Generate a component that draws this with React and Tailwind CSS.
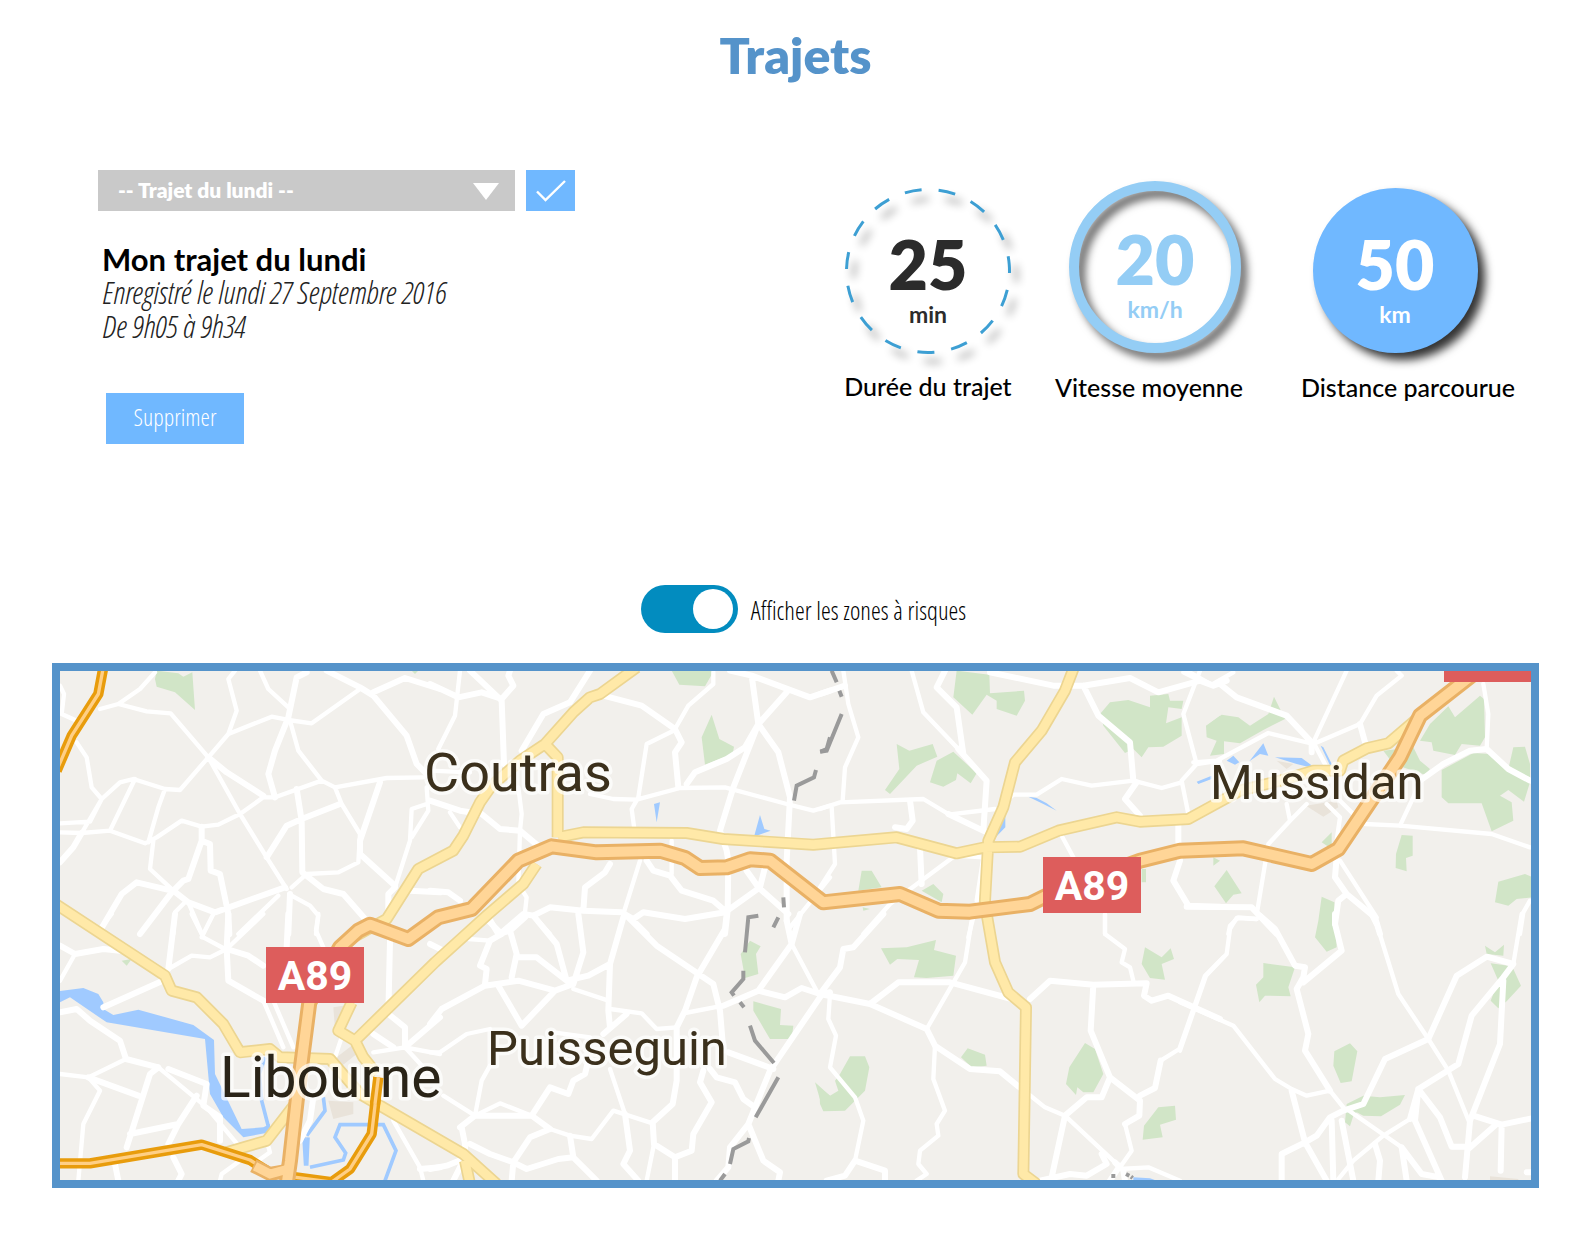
import React from "react";

/* Map geometry: each tile has its own origin and uses a third-of-a-unit grid. */
const TILES = [
  {
    x: 40, y: 655,
    minor: "M180 165L235 150L320 172L392 178L505 310M235 150L300 105L345 55M60 95L72 120L65 180L120 205M110 265L140 310L155 400L185 435M60 508L150 503L185 435L240 385L280 375L375 405L420 408L505 310L565 240L590 170L565 75L585 50M60 535L125 537L210 530L315 568L350 550L425 500L485 518L535 512L600 480L670 430L705 430L845 380L885 400L1040 372L1150 370M125 537L185 435M285 375L210 530M375 405L355 460L325 565M340 560L330 645L400 710M755 700L800 660L895 655L955 625L960 540L905 450L885 400M565 240L695 188L745 198L815 208L960 105M660 50L685 105L745 160M750 200L775 290L845 380M505 310L600 480L680 610L740 705M400 840L405 775L435 745M445 745L490 850M715 725L595 840M755 725L810 755L835 785L828 840M1115 550L1165 470L1160 400M1065 700L1110 560L1115 465L1160 450",
    wide: "M60 625L100 580L125 537M400 710L445 745L525 775L735 700M485 518L485 560L445 675L430 680L395 715L300 840M485 560L510 570L512 650L540 660L565 780L568 840M180 830L245 720L290 685L395 710M800 55L770 70L745 190L705 290L685 360L705 430M505 310L560 355L670 425M860 50L960 100L1000 125L1100 245L1130 330L1170 370M1000 115L1095 72L1200 105M770 405L785 500L787 655L850 705L910 720L980 800M680 610L740 515L785 495L900 450M1020 385L960 560L960 600L1065 695M750 720L745 840M1065 700L1045 720L1045 770M1110 710L1200 715",
    green: "M345 75L350 50L415 58L430 68L457 55L465 168L405 115L350 98ZM1115 50L1135 50L1125 60Z",
  },
  {
    x: 430, y: 655,
    minor: "M90 50L75 185L25 285M735 228L650 270L625 430L605 465L615 540M850 55L850 90L775 155L735 225M480 420L550 435L620 437L750 402L885 400L1070 450L1150 470L1200 455M60 475L90 520M265 400L275 480L270 530L265 690L290 730L285 775M630 620L580 780M725 560L725 660M1080 820L1200 670M310 785L360 840M0 350L120 355",
    wide: "M0 90L85 130L155 115L215 135L250 95L235 65L240 50M120 50L215 140L222 330M275 290L340 180L420 145L480 50M520 125L635 155L735 225L755 265L735 295L745 400M770 390L795 355L890 315L945 280L985 210L910 400L870 530L890 590L895 620L893 770L885 840M900 50L965 65L1140 130L1200 110M965 65L985 210L1045 295L1080 430L1070 620L1070 800M985 210L1070 115M0 440L90 470L155 480L210 525L270 530L330 580M0 710L55 715L90 740M540 630L525 655L465 700L460 770M650 620L670 650L720 665L755 710L850 740L885 770M950 650L985 700L1075 780M1005 640L990 700L885 775L765 795L640 775L610 795L575 775L460 770L360 760L310 785L280 780L210 840M175 800L215 840M605 795L650 840",
    green: "M725 50L852 50L825 97L748 92ZM845 182L868 255L912 278L908 300L825 332L815 250Z",
    water: "M672 450L690 445L680 505ZM990 483L1003 525L1022 530L972 548Z",
    border: "M1200 250L1190 285L1172 293M1158 348L1152 370L1100 395L1092 440M1060 730L1062 760M1045 790L1030 820",
  },
  {
    x: 820, y: 655,
    minor: "M70 50L85 150L115 250L75 340L68 440M0 465L60 445L310 435L385 480M35 460L45 630L0 700M275 50L310 175L415 285M385 482L525 465M490 610L470 740M460 790L445 850M130 840L210 750L405 605L490 610M565 435L580 422L650 422L725 375L815 395L940 380L1025 402L1085 385M1140 50L1090 180L1130 330L1085 380L1105 480M1130 330L1200 320M1090 55L1140 80M725 545L760 610M855 780L855 840",
    wide: "M0 120L75 95M385 480L500 535M270 440L278 500L260 525L225 520M300 580L305 690M415 285L500 380L490 530M375 50L350 100L410 160L430 300M510 55L700 95L790 95L930 72L1015 115L1140 80L1180 95L1220 80M790 95L835 185L930 265L940 380M950 385L915 435L960 485M1075 510L1075 560L1080 620L1060 680L1105 755L1200 758",
    green: "M410 50L508 62L510 118L612 110L615 140L590 185L530 165L530 140L500 122L457 182L400 130ZM230 270L268 290L338 270L352 308L290 335L210 420L195 408L238 345ZM350 320L400 293L470 358L452 388L412 358L408 378L370 398L330 385ZM842 178L870 145L925 138L990 160L990 125L1045 120L1050 140L1090 140L1085 165L1045 160L1038 208L1085 190L1085 245L1030 278L985 280L965 310L940 285L915 297L850 215ZM125 650L155 650L185 700L115 710ZM305 710L340 690L370 720L365 745ZM965 645L978 645L978 685L965 685ZM1160 215L1200 185L1200 260L1162 240ZM128 760L150 765L130 770Z",
    water: "M545 480L556 478L556 520L522 555ZM625 428L650 432L680 448L710 470L670 450Z",
    border: "M35 50L50 85M58 110L65 128M65 180L20 290L0 293",
  },
  {
    x: 1180, y: 655,
    minor: "M40 325L110 320L265 237L400 270L540 210M500 50L400 265L440 340M540 210L590 125L665 65L650 50M380 450L330 500L265 570L232 770M320 450L330 500M440 450L480 490L470 560M480 440L520 480M555 510L660 515L935 540L1050 580M660 515L700 430L720 380M910 90L925 180L920 285M145 840L150 815L175 790L230 795M480 620L590 790M1050 740L1030 775L1020 840M20 50L95 92L160 55",
    wide: "M120 90L170 130L320 185L395 265L395 295M540 210L555 265M720 380L790 330L870 290L920 285L985 345L1050 380M20 758L215 760L290 840M470 610L465 670L500 720L585 790L600 840M500 720L475 740L465 810",
    green: "M78 215L125 182L175 190L210 215L265 180L282 128L315 195L250 228L180 268L132 262L132 300L90 305L110 260L80 250ZM720 260L750 210L805 157L825 190L900 125L912 135L915 250L900 275L845 270L825 303L760 290L755 265ZM610 290L700 280L720 320L750 345L735 362L640 330ZM785 348L880 297L930 300L975 345L1050 385L1032 443L985 408L960 425L995 445L1000 500L935 532L905 448L805 448L785 430ZM1000 280L1035 278L1050 330L1050 370L985 345ZM665 543L698 545L698 605L678 612L680 652L647 642L648 600ZM955 683L1035 660L1060 670L1060 730L1010 735L985 755L945 745ZM140 648L185 718L160 722L138 748L103 697ZM425 565L455 535L455 585ZM425 728L463 745L470 880L440 893L405 850L415 800ZM100 610L120 620L100 635Z",
    water: "M50 383L95 365L95 375L55 390ZM140 320L160 305L178 325L165 332ZM208 322L250 268L265 305L240 300ZM285 310L365 312L410 345L350 330ZM422 275L430 280L468 355L460 355Z",
    urban: "M378 455L470 440L475 460L430 488ZM290 320L340 330L320 345Z",
  },
  {
    x: 40, y: 915,
    minor: "M60 200L105 120M215 0L180 45M385 165L455 125L510 130L560 105L670 0M455 0L490 70L555 105M670 260L730 400M835 0L828 50L850 100M60 480L145 490L258 435M145 490L180 530L130 630L115 800M355 460L500 580L600 700M700 260L760 400M905 370L885 430M1000 415L1095 400L1200 420M1060 620L1140 760L1150 800M680 680L690 715L640 750M600 740L545 780L540 800M485 70L520 0M1095 400L1150 460",
    wide: "M60 95L105 120L190 105L240 110M405 0L385 165M565 0L560 105L565 200L670 260M560 105L625 125L670 155M190 280L380 195M745 0L740 100M60 295L110 285L150 320L240 380L258 435L355 460M145 490L295 545M355 460L330 480L260 700M270 660L415 630L470 545M415 630L385 690M385 465L500 510L490 575L540 610L540 680M400 730L425 780L415 800M225 750L235 800M1050 80L1045 300L1095 340L1095 400L1200 310M1000 360L1060 400M1140 765L1200 760M820 550L810 620L780 680",
    green: "M245 140L275 135L260 155Z",
    water: "M50 232L130 222L175 240L190 265L190 285L220 303L295 287L460 333L522 378L525 480L605 645L670 640L690 630L690 655L610 670L550 610L510 540L495 375L200 325L90 250L50 270Z",
    stream: "M687 645L665 560L658 480L675 430M850 550L855 590L800 665M792 670L797 755M804 670L800 755M810 760L910 738L917 717L885 670L900 632L1030 632L1068 710L1035 800",
    urban: "M865 560L940 565L940 600L880 615ZM880 280L910 275L900 345L885 345ZM890 430L935 395L950 420L900 460Z",
  },
  {
    x: 430, y: 915,
    minor: "M0 415L30 415L110 360L180 345M180 455L155 500L135 605L40 545M135 605L210 568L305 605M540 465L585 600M765 297L880 275M540 285L635 298L680 345L740 340M668 628L550 590L485 675L420 665L360 645M672 690L650 800M1085 90L1165 240M115 75L180 80M535 260L430 225M370 355L480 370",
    wide: "M175 10L205 60L240 50L285 10M180 80L150 155L170 165L165 210M180 80L215 60M240 50L260 120L245 190M260 130L320 130L410 200M310 5L380 90L410 200L475 185L540 150M445 0L460 115L430 210M580 10L540 150L535 290L540 340M0 330L35 285L165 215L265 200L375 230L430 210M205 215L275 335L375 230M595 10L680 95L850 210L870 290L880 410M890 0L885 45L800 190L765 290L740 340L740 500L728 570L668 625L672 690L735 730L785 710L790 660L845 565L810 505L820 470M520 360L590 300M880 275L985 230L1065 250L1115 222L1170 240L1200 235M1070 20L1085 90M985 230L1085 90L1110 0M1180 235L1020 470L955 630L900 700L895 760L860 800M90 640L135 605L305 605L360 520L415 540L430 500L465 480L475 440M305 605L360 645M95 640L105 690L105 730L70 800M120 690L180 720L250 745L290 765L385 735L430 730L500 800M360 645L300 670L250 745L245 800M420 665L430 730M585 600L600 710L580 750L625 800M735 730L735 800M840 465L860 490L915 505L940 555L975 580M895 415L1030 465M955 630L1000 740L1050 775L1045 800M0 765L50 755L100 735M0 90L40 110",
    green: "M960 80L992 97L978 120L985 180L945 192L932 120ZM970 262L1053 285L1050 333L1090 335L1085 375L1020 375L970 290ZM1155 505L1200 545L1200 590L1180 590Z",
    border: "M985 5L955 10L945 115M940 170L940 195L905 235L912 245M930 265L942 280M960 335L975 380L1032 447M1045 490L977 610M957 672L955 682L910 705L900 750M885 780L870 800",
  },
  {
    x: 820, y: 915,
    minor: "M455 20L435 145L320 345M855 0L855 60L915 105L905 145L930 160L940 200M30 240L25 315L48 365L30 460L105 550L130 620L105 740M735 605L885 745M915 630L935 710L900 760M1022 440L1078 405L1155 185L1210 130M900 765L985 760L1080 800M345 395L340 495L375 590L350 630L355 665L300 710L295 750L320 780L290 800M625 540L675 580L735 605",
    wide: "M190 0L100 100L70 105L60 160L0 240L150 270L320 345L345 395L450 465L540 472L605 525M150 270L235 205L390 205L575 255M105 740L75 785L20 800M105 740L195 770L195 800M630 255L690 200L820 212L980 208L972 245L995 260L1045 245L1200 315M820 212L812 350L870 490L845 550L800 550L735 605L695 790M870 490L960 560L958 605L915 630M960 545L1005 522L1022 440M845 720L860 750L800 785L750 780L660 800M900 755L870 800M910 770L915 800M885 745L900 760",
    green: "M183 103L260 100L348 78L342 108L408 125L400 185L320 192L282 190L297 138L232 135L210 152ZM90 427L135 427L148 460L135 530L75 590L10 592L0 570L-2 520L30 545L55 530L45 500L60 480ZM443 403L495 422L500 455L455 460L423 430ZM795 387L825 405L850 480L820 535L790 535L772 520L768 543L738 510L748 460ZM975 100L1025 130L1052 103L1062 135L1025 150L1035 197L990 192L965 150ZM1015 580L1065 575L1068 617L1020 632L1028 670L968 677L972 635Z",
    water: "M940 790L990 793L1010 800L940 800Z",
    border: "M880 780L880 792M918 780L928 785M933 788L938 792",
  },
  {
    x: 1180, y: 915,
    minor: "M150 45L140 120L78 185L0 410M590 30L655 240L745 375L805 470L870 630M1000 150L1025 0M450 530L490 580M500 585L665 700M690 615L610 665L520 740L475 795M0 265L160 335L285 495L335 525L380 545L450 530M150 45L170 12L230 15",
    wide: "M240 5L285 45L345 155L375 160L370 190L350 225L385 360L375 410L450 530M465 0L465 30L485 110L370 205M575 0L590 30M490 590L550 570L615 435L745 375L830 185L920 128L1000 150L970 190L875 305L835 450L715 525L690 615M970 200L960 390L870 620L855 790M335 530L375 685L440 800M305 800L305 720L375 685L410 665L450 610L490 590M455 620L460 800M485 620L520 800M665 700L725 780L780 790M665 700L680 800M585 690L600 740L595 800M715 525L705 620L785 800M715 525L780 610L815 698L860 698M865 705L950 630M880 605L965 632L1060 612M965 632L962 770M1040 775L1060 775",
    green: "M250 147L345 160L325 220L332 247L255 245L238 265L228 212L250 190ZM510 388L532 412L515 502L482 507L460 455L463 412ZM500 570L550 545L600 550L675 543L660 572L603 607L550 605L530 595L520 605L510 637L495 625ZM915 95L945 115L972 92L970 125L920 120ZM932 148L985 155L1000 165L1023 215L980 262L955 283L932 260L955 200Z",
    urban: "M930 787L1015 795L1015 800L930 800Z",
  },
];

const ORIGIN = { NW: "translate(40 655) scale(.33333)", N: "translate(430 655) scale(.33333)", SW: "translate(40 915) scale(.33333)" };

const SECONDARY = [
  [ORIGIN.SW, "M50-28L375 185L395 230L470 250L550 330L600 415L690 405L720 430L870 435L960 540L1270 720L1370 810M1490-150L1450-90L1345 0L1185 145L945 380L970 430L1010 480M945 380L895 350L935 265M765 570L680 680L560 715M1275 740L1290 810"],
  [ORIGIN.N, "M-230 850L-130 795L-35 645L70 590L100 545L150 445L185 395L270 320L345 270L430 175L480 130L510 120L620 40M345 270L383 310L383 550M385 550L460 535L770 537L880 555L1150 572L1400 550L1580 598L1665 580L1770 578L1885 530L2060 490L2130 503L2275 495L2430 410L2550 380L2650 350L2730 350L2740 320L2810 283L2875 268L2960 195M1930 45L1905 110L1835 230L1755 325L1720 460L1675 560L1665 740L1670 780L1695 925L1735 1015L1788 1060L1780 1560L1820 1590"],
];

const HIGHWAY = "M-430 1590L-420 1520L-400 1340L-362 1045L-270 880L-215 830L-180 812L-65 855L25 790L125 765L265 620L365 577L500 595L690 590L765 612L810 642L890 640L960 616L1020 620L1180 745L1410 720L1525 770L1620 773L1800 750L1870 715L2130 620L2250 590L2440 583L2645 630L2725 585L2910 310L2970 185L3130 60";

const TRUNKS = [
  [ORIGIN.NW, "M190 40L175 120L95 245L50 350"],
  [ORIGIN.SW, "M50 748L150 748L485 692L630 738L680 770M1015 490L995 660L930 765L860 815M730 785L880 805"],
];

const PLACES = [
  { name: "Coutras", x: 424, y: 792, size: 54, fill: "#3b301c" },
  { name: "Mussidan", x: 1210, y: 800, size: 49, fill: "#3b301c" },
  { name: "Puisseguin", x: 487, y: 1066, size: 49, fill: "#3b301c" },
  { name: "Libourne", x: 220, y: 1098, size: 57, fill: "#2a2418" },
];

function Layer({ kind, ...props }) {
  return (
    <g {...props}>
      {TILES.filter((t) => t[kind]).map((t) => (
        <path key={`${t.x}-${t.y}`} transform={`translate(${t.x} ${t.y}) scale(.33333)`} d={t[kind]} />
      ))}
    </g>
  );
}

function Roads({ items, ...props }) {
  return (
    <g fill="none" strokeLinejoin="round" {...props}>
      {items.map(([transform, d]) => (
        <path key={transform} transform={transform} d={d} />
      ))}
    </g>
  );
}

function Shield({ x, y }) {
  return (
    <g>
      <rect x={x} y={y} width="98" height="56" fill="#dd5d5c" />
      <text x={x + 49} y={y + 43} textAnchor="middle" fontSize="41" className="font-[Roboto] font-bold" fill="#fff">
        A89
      </text>
    </g>
  );
}

function TripMap() {
  const highway = [[ORIGIN.N, HIGHWAY]];
  return (
    <svg viewBox="60 672 1471 509" className="block w-full" role="img" aria-label="Carte du trajet">
      <rect x="60" y="672" width="1471" height="509" fill="#f2f0ec" />
      <Layer kind="urban" fill="#e9e3da" />
      <Layer kind="green" fill="#d1e5c7" />
      <Layer kind="water" fill="#a0caff" />
      <Layer kind="stream" fill="none" stroke="#a0caff" strokeWidth="11" />
      <Layer kind="minor" fill="none" stroke="#fff" strokeWidth="13" strokeLinejoin="round" strokeLinecap="round" />
      <Layer kind="wide" fill="none" stroke="#fff" strokeWidth="18" strokeLinejoin="round" strokeLinecap="round" />
      <Layer kind="border" fill="none" stroke="#9a9a9a" strokeWidth="12" />
      <Roads items={SECONDARY} stroke="#ecd591" strokeWidth="36" />
      <Roads items={SECONDARY} stroke="#ffe9a8" strokeWidth="26" />
      <Roads items={TRUNKS} stroke="#e89c0c" strokeWidth="31" />
      <Roads items={TRUNKS} stroke="#ffcf85" strokeWidth="10" />
      <Roads items={highway} stroke="#e9b165" strokeWidth="48" />
      <path transform={ORIGIN.SW} d="M640 755L690 780L745 770" fill="none" stroke="#e9b165" strokeWidth="42" />
      <Roads items={highway} stroke="#ffd597" strokeWidth="30" />
      <path transform={ORIGIN.SW} d="M645 757L690 780L745 765" fill="none" stroke="#ffd597" strokeWidth="27" />
      {PLACES.map((p) => (
        <text
          key={p.name}
          x={p.x}
          y={p.y}
          fontSize={p.size}
          fill={p.fill}
          stroke="#fff"
          strokeOpacity=".7"
          strokeWidth="7"
          strokeLinejoin="round"
          className="font-[Roboto] [paint-order:stroke]"
        >
          {p.name}
        </text>
      ))}
      <Roads items={[[ORIGIN.SW, "M1015 490L1005 570"]]} stroke="#e89c0c" strokeWidth="31" />
      <Roads items={[[ORIGIN.SW, "M1015 490L1005 570"]]} stroke="#ffcf85" strokeWidth="10" />
      <Shield x={266} y={948} />
      <Shield x={1043} y={858} />
      <rect x="1444" y="672" width="87" height="11" fill="#dd5d5c" />
    </svg>
  );
}

function Stat({ value, unit, label, tone, className, labelClass, children }) {
  return (
    <figure className={`flex flex-col items-center ${className}`}>
      <div className={`relative flex flex-col items-center ${tone}`}>
        {children}
        <strong className="relative text-[68px] leading-[70px] font-extrabold">{value}</strong>
        <span className="relative mt-[2px] text-[23px] leading-[26px] font-bold">{unit}</span>
      </div>
      <figcaption className={`text-[25px] leading-7 font-medium whitespace-nowrap text-black ${labelClass}`}>{label}</figcaption>
    </figure>
  );
}

export default function App() {
  return (
    <main className="bg-white pt-7 pr-[42px] pb-14 pl-[52px] font-[Lato,sans-serif] text-black">
      <h1 className="text-center text-[50px] leading-[54px] font-extrabold text-[#5593ca]">Trajets</h1>

      <div className="mt-[88px] flex justify-between">
        <section className="pl-[46px]">
          <form className="flex gap-[11px]" onSubmit={(e) => e.preventDefault()}>
            <div className="relative">
              <select
                aria-label="Trajet"
                className="h-[41px] w-[417px] appearance-none bg-[#c9c9c9] pr-12 pb-[2px] pl-5 text-[21px] font-extrabold text-white"
              >
                <option>-- Trajet du lundi --</option>
              </select>
              <svg viewBox="0 0 26 17" className="pointer-events-none absolute top-[13px] right-4 w-[26px]" fill="#fff">
                <path d="M0 0H26L13 17Z" />
              </svg>
            </div>
            <button type="submit" aria-label="Valider" className="flex h-[41px] w-[49px] items-center justify-center bg-[#70b8ff]">
              <svg viewBox="0 0 30 22" className="w-[30px]" fill="none" stroke="#fff" strokeWidth="2.4">
                <path d="M1 11.500L9.500 20L29 1" />
              </svg>
            </button>
          </form>

          <h2 className="mt-8 pl-1 text-[31px] leading-8 font-bold">Mon trajet du lundi</h2>
          <p className="pl-1 font-['Open_Sans_Condensed_Light','Open_Sans_Condensed','Liberation_Sans_Narrow',sans-serif] text-[31px] leading-[34px] font-light text-[#222] italic">
            Enregistré le lundi 27 Septembre 2016
            <br />
            De 9h05 à 9h34
          </p>
          <button
            type="button"
            className="mt-[50px] ml-2 block h-[51px] w-[138px] bg-[#70b8ff] pb-1 font-['Open_Sans_Condensed_Light','Open_Sans_Condensed','Liberation_Sans_Narrow',sans-serif] text-[24px] text-white"
          >
            Supprimer
          </button>
        </section>

        <section className="flex gap-[43px] pt-[11px] pr-[25px]">
          <Stat value="25" unit="min" label="Durée du trajet" className="w-[168px]" labelClass="mt-[18px]" tone="mt-[7px] h-[166px] w-[166px] pt-[41px] text-[#2b2b2b]">
            <svg viewBox="0 0 166 166" className="absolute inset-0 overflow-visible drop-shadow-[7px_9px_4px_rgba(0,0,0,0.45)]">
              <circle cx="83" cy="83" r="81.500" fill="none" stroke="#3d9fd3" strokeWidth="3" pathLength="360" strokeDasharray="12 12" transform="rotate(85.500 83 83)" />
            </svg>
          </Stat>
          <Stat value="20" unit="km/h" label="Vitesse moyenne" className="w-[188px]" labelClass="mt-5" tone="ml-3 h-[172px] w-[172px] pt-[43px] text-[#94cdf5]">
            <svg viewBox="0 0 172 172" className="absolute inset-0 overflow-visible drop-shadow-[6px_7px_4px_rgba(0,0,0,0.6)]">
              <circle cx="86" cy="86" r="81" fill="none" stroke="#94cdf5" strokeWidth="10" />
            </svg>
          </Stat>
          <Stat value="50" unit="km" label="Distance parcourue" className="ml-4 w-[212px]" labelClass="mt-5" tone="mt-[7px] mr-[26px] h-[165px] w-[165px] pt-[41px] text-white">
            <svg viewBox="0 0 166 166" className="absolute inset-0 overflow-visible drop-shadow-[7px_7px_5px_rgba(0,0,0,0.8)]">
              <circle cx="83" cy="83" r="83" fill="#70b8ff" />
            </svg>
          </Stat>
        </section>
      </div>

      <label className="mt-[141px] flex items-center justify-center gap-[13px] pl-4 font-['Open_Sans_Condensed_Light','Open_Sans_Condensed','Liberation_Sans_Narrow',sans-serif] text-[25px]">
        <input
          type="checkbox"
          role="switch"
          defaultChecked
          className="h-12 w-[97px] appearance-none rounded-full bg-[#028cbf] before:mt-1 before:ml-[52px] before:block before:size-10 before:rounded-full before:bg-white"
        />
        <span className="pt-1">Afficher les zones à risques</span>
      </label>

      <div className="mt-[30px] border-8 border-[#5593ca]">
        <TripMap />
      </div>
    </main>
  );
}
